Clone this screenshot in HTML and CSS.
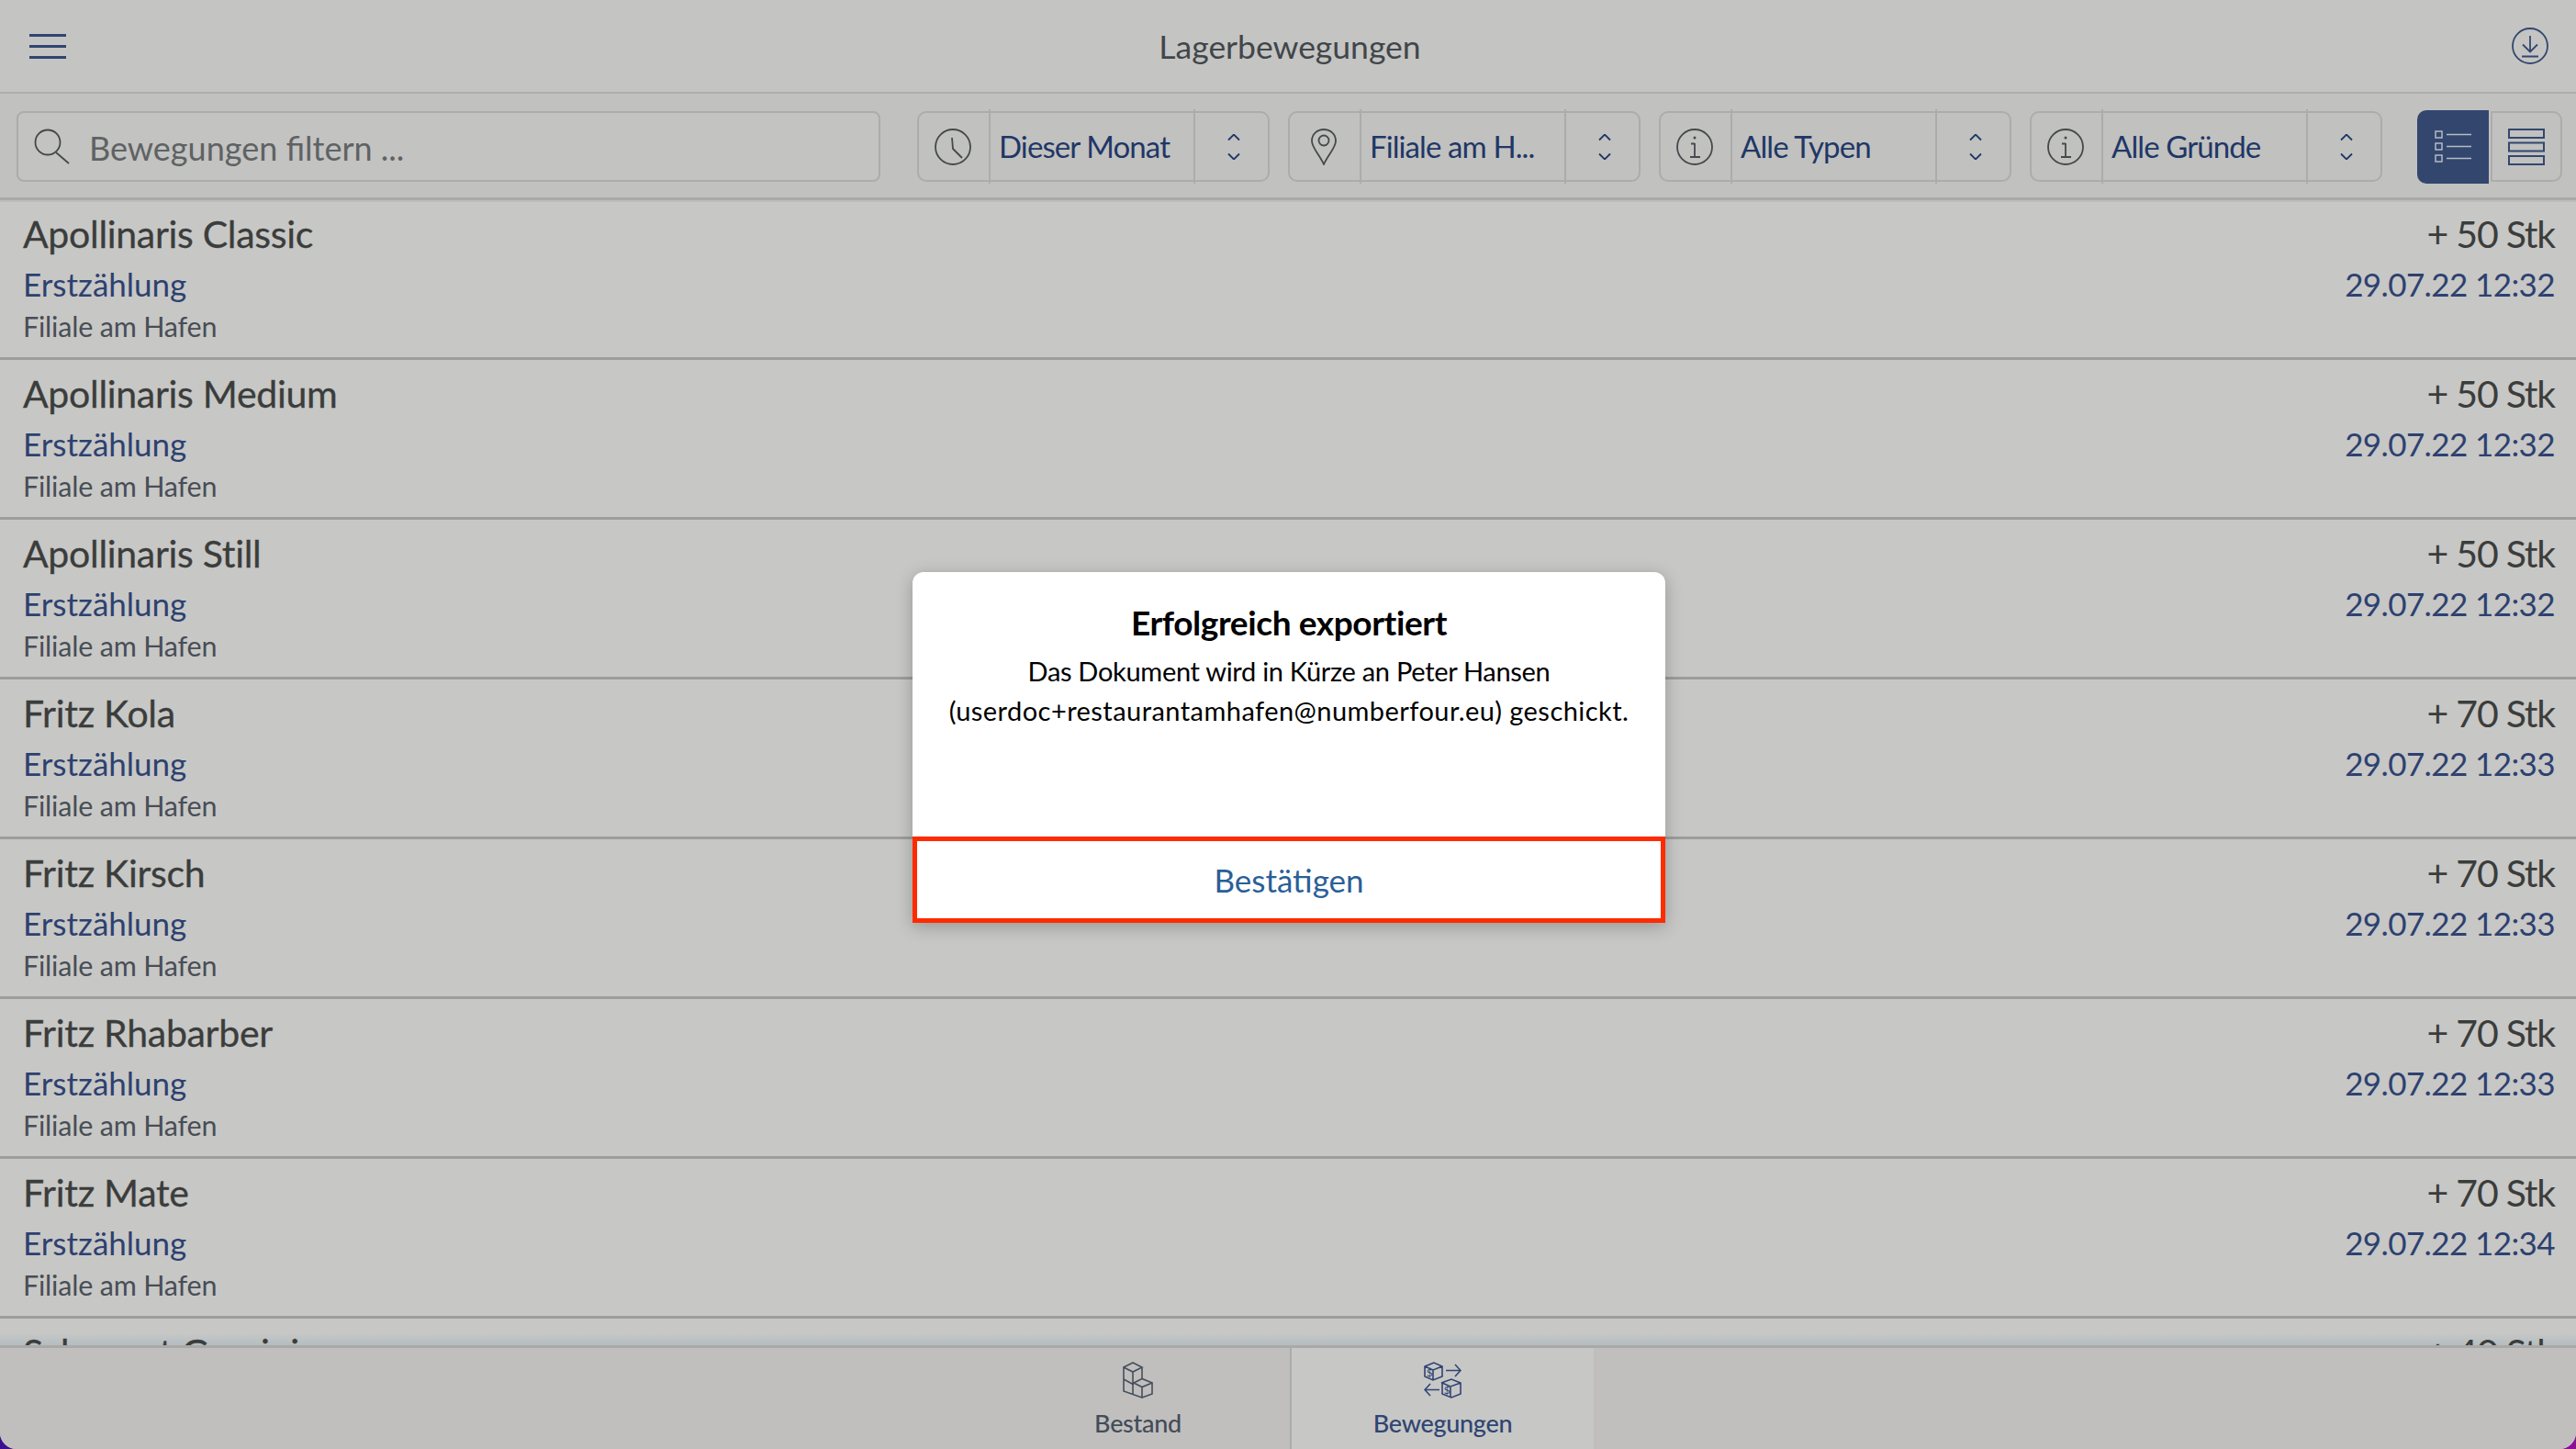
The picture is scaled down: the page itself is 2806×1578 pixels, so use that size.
FILE: index.html
```html
<!DOCTYPE html>
<html lang="de">
<head>
    <meta charset="UTF-8">
    <title>Lagerbewegungen</title>
    <link rel="stylesheet" href="styles.css">
</head>
<body>
<div class="screen">
    <header class="topbar">
        <svg class="topbar__menu" viewBox="0 0 40 27"><path d="M0 1.5H40M0 13.5H40M0 25.5H40"/></svg>
        <div class="topbar__title">Lagerbewegungen</div>
        <svg class="topbar__export" viewBox="0 0 40 40"><circle cx="20" cy="20" r="19"/><path d="M20 9V26M12 18.5L20 26.5L28 18.5M11 31.5H29"/></svg>
    </header>

    <div class="toolbar">
        <div class="search">
            <svg class="search__icon" viewBox="0 0 40 39"><circle cx="15" cy="15" r="13.5"/><path d="M24 26L38 38"/></svg>
            <span class="search__text">Bewegungen filtern ...</span>
        </div>
        <div class="filters">
            <div class="filter">
                <div class="filter__icon"><svg class="icon-40" viewBox="0 0 40 40"><circle cx="20" cy="20" r="19"/><path d="M19 10L20 22L30 32"/></svg></div>
                <div class="filter__value">Dieser Monat</div>
                <div class="filter__arrows"><svg class="arrows" viewBox="0 0 14 28"><path d="M1 6.500L7 0.500L13 6.500M1 21.500L7 27.500L13 21.500"/></svg></div>
            </div>
            <div class="filter">
                <div class="filter__icon"><svg class="icon-pin" viewBox="0 0 28 40"><path d="M14 39C9 28 1 21 1 13.500C1 6 7 1 14 1S27 6 27 13.500C27 21 19 28 14 39Z"/><circle cx="14" cy="13" r="5.500"/></svg></div>
                <div class="filter__value">Filiale am H...</div>
                <div class="filter__arrows"><svg class="arrows" viewBox="0 0 14 28"><path d="M1 6.500L7 0.500L13 6.500M1 21.500L7 27.500L13 21.500"/></svg></div>
            </div>
            <div class="filter">
                <div class="filter__icon"><svg class="icon-40" viewBox="0 0 40 40"><circle cx="20" cy="20" r="19"/><path d="M20 16V31M15 31H26M16 16.500H20"/><circle class="dot" cx="20" cy="10" r="1.500"/></svg></div>
                <div class="filter__value">Alle Typen</div>
                <div class="filter__arrows"><svg class="arrows" viewBox="0 0 14 28"><path d="M1 6.500L7 0.500L13 6.500M1 21.500L7 27.500L13 21.500"/></svg></div>
            </div>
            <div class="filter">
                <div class="filter__icon"><svg class="icon-40" viewBox="0 0 40 40"><circle cx="20" cy="20" r="19"/><path d="M20 16V31M15 31H26M16 16.500H20"/><circle class="dot" cx="20" cy="10" r="1.500"/></svg></div>
                <div class="filter__value">Alle Gründe</div>
                <div class="filter__arrows"><svg class="arrows" viewBox="0 0 14 28"><path d="M1 6.500L7 0.500L13 6.500M1 21.500L7 27.500L13 21.500"/></svg></div>
            </div>
        </div>
        <div class="view-toggle">
            <div class="view-toggle__item view-toggle__item--active">
                <svg class="icon-list" viewBox="0 0 40 35"><path d="M1 1H8V8H1ZM1 14H8V21H1ZM1 27H8V34H1ZM13 4.500H40M13 17.500H40M13 30.500H40"/></svg>
            </div>
            <div class="view-toggle__item">
                <svg class="icon-view" viewBox="0 0 40 40"><path d="M1 1H39V10H1ZM1 15.500H39V24.500H1ZM1 30H39V39H1Z"/></svg>
            </div>
        </div>
    </div>

    <div class="list">
        <div class="row">
            <div><div class="row__title">Apollinaris Classic</div><div class="row__type">Erstzählung</div><div class="row__store">Filiale am Hafen</div></div>
            <div class="row__right"><div class="row__title row__qty">+ 50 Stk</div><div class="row__type row__date">29.07.22 12:32</div></div>
        </div>
        <div class="row">
            <div><div class="row__title">Apollinaris Medium</div><div class="row__type">Erstzählung</div><div class="row__store">Filiale am Hafen</div></div>
            <div class="row__right"><div class="row__title row__qty">+ 50 Stk</div><div class="row__type row__date">29.07.22 12:32</div></div>
        </div>
        <div class="row">
            <div><div class="row__title">Apollinaris Still</div><div class="row__type">Erstzählung</div><div class="row__store">Filiale am Hafen</div></div>
            <div class="row__right"><div class="row__title row__qty">+ 50 Stk</div><div class="row__type row__date">29.07.22 12:32</div></div>
        </div>
        <div class="row">
            <div><div class="row__title">Fritz Kola</div><div class="row__type">Erstzählung</div><div class="row__store">Filiale am Hafen</div></div>
            <div class="row__right"><div class="row__title row__qty">+ 70 Stk</div><div class="row__type row__date">29.07.22 12:33</div></div>
        </div>
        <div class="row">
            <div><div class="row__title">Fritz Kirsch</div><div class="row__type">Erstzählung</div><div class="row__store">Filiale am Hafen</div></div>
            <div class="row__right"><div class="row__title row__qty">+ 70 Stk</div><div class="row__type row__date">29.07.22 12:33</div></div>
        </div>
        <div class="row">
            <div><div class="row__title">Fritz Rhabarber</div><div class="row__type">Erstzählung</div><div class="row__store">Filiale am Hafen</div></div>
            <div class="row__right"><div class="row__title row__qty">+ 70 Stk</div><div class="row__type row__date">29.07.22 12:33</div></div>
        </div>
        <div class="row">
            <div><div class="row__title">Fritz Mate</div><div class="row__type">Erstzählung</div><div class="row__store">Filiale am Hafen</div></div>
            <div class="row__right"><div class="row__title row__qty">+ 70 Stk</div><div class="row__type row__date">29.07.22 12:34</div></div>
        </div>
        <div class="row">
            <div><div class="row__title">Schwarzt Granini</div></div>
            <div class="row__right"><div class="row__title row__qty">+ 40 Stk</div></div>
        </div>
    </div>

    <nav class="tabs">
        <div class="tab">
            <svg class="tab__icon tab__icon--stock" viewBox="0 0 33 40"><path d="M11 1L1 6L11 11L21 6ZM1 6V32L21 39M11 11V36M1 19L12 25M21 18.500L12 23L21 27.500L32 23ZM21 27.500V39L32 35V23M21 6V18.500"/></svg>
            <div class="tab__label">Bestand</div>
        </div>
        <div class="tab tab--active">
            <svg class="tab__icon" viewBox="0 0 41 40"><path d="M11 1L1 5V16L10 20L20 16V5ZM1 5L10 9L20 5M10 9V20M24 9.500H40M34 3L40 9.500L34 16M19 23L30 19L40 23V35L30 39L20 35V23ZM20 23L29 27L40 23M29 27V39M17 30.500H1M7 24L1 30.500L7 37"/><text class="tab__dollar" x="2.800" y="16">$</text><text class="tab__dollar" x="21.800" y="35">$</text></svg>
            <div class="tab__label">Bewegungen</div>
        </div>
    </nav>

    <div class="dialog">
        <div class="dialog__body">
            <div class="dialog__title">Erfolgreich exportiert</div>
            <div class="dialog__text dialog__text--first">Das Dokument wird in Kürze an Peter Hansen</div>
            <div class="dialog__text">(userdoc+restaurantamhafen@numberfour.eu) geschickt.</div>
        </div>
        <div class="dialog__button">Bestätigen</div>
    </div>
</div>
</body>
</html>
```

FILE: styles.css
```css
* {
    box-sizing: border-box;
}

html, body {
    margin: 0;
    padding: 0;
    height: 100%;
}

body {
    background: linear-gradient(90deg, #3a0f90, #8a1095);
    font-family: "Lato", "Noto Sans", sans-serif;
    overflow: hidden;
}

svg {
    display: block;
    fill: none;
}

.screen {
    position: relative;
    display: flex;
    flex-direction: column;
    height: 1578px;
    background: #c7c7c5;
    border-radius: 0 0 18px 18px;
    overflow: hidden;
}

/* top bar */
.topbar {
    display: flex;
    align-items: center;
    justify-content: space-between;
    height: 102px;
    padding: 0 30px 0 32px;
    background: #c4c4c2;
    border-bottom: 2px solid #aeaeac;
    flex-shrink: 0;
    position: relative;
}

.topbar__menu {
    width: 40px;
    height: 27px;
    stroke: #2f4573;
    stroke-width: 3;
}

.topbar__title {
    font-size: 35.500px;
    color: #41464a;
    margin-left: 2px;
}

.topbar__export {
    width: 40px;
    height: 40px;
    stroke: #33476f;
    stroke-width: 1.800;
}

/* filter bar */
.toolbar {
    display: flex;
    align-items: center;
    height: 116px;
    padding: 2px 15px 0 18px;
    background: #c1c1bf;
    border-bottom: 3px solid #a9a9a7;
    box-shadow: 0 2px 0 #bcbcba;
    flex-shrink: 0;
}

.search {
    display: flex;
    align-items: center;
    width: 941px;
    height: 77px;
    padding-left: 17px;
    border: 2px solid #acacaa;
    border-radius: 8px;
    background: #c3c3c1;
}

.search__icon {
    width: 40px;
    height: 39px;
    stroke: #45484a;
    stroke-width: 1.800;
    margin-right: 20px;
}

.search__text {
    font-size: 36px;
    color: #5f6264;
    padding-top: 2px;
}

.filters {
    display: flex;
    gap: 20px;
    margin-left: 40px;
}

.filter {
    display: flex;
    width: 384px;
    height: 77px;
    border: 2px solid #acacaa;
    border-radius: 10px;
    color: #1f3767;
}

.filter__icon {
    display: flex;
    align-items: center;
    justify-content: center;
    width: 76px;
    padding-right: 2px;
    flex-shrink: 0;
    stroke: #45494c;
    stroke-width: 1.800;
}

.icon-40 {
    width: 40px;
    height: 40px;
}

.icon-pin {
    width: 28px;
    height: 40px;
}

.dot {
    fill: #45494c;
    stroke: none;
}

.filter__value {
    flex: 1;
    display: flex;
    align-items: center;
    padding: 0 0 2px 9px;
    margin: -4px 0;
    font-size: 33px;
    letter-spacing: -0.900px;
    border-left: 2px solid #acacaa;
    border-right: 2px solid #acacaa;
    white-space: nowrap;
}

.filter__arrows {
    display: flex;
    align-items: center;
    justify-content: center;
    width: 79px;
    padding-left: 4px;
    flex-shrink: 0;
}

.arrows {
    width: 14px;
    height: 28px;
    stroke: #1f3767;
    stroke-width: 1.800;
}

.view-toggle {
    display: flex;
    align-items: center;
    margin-left: 38px;
}

.view-toggle__item {
    display: flex;
    align-items: center;
    justify-content: center;
    width: 78px;
    height: 77px;
    margin-left: 2px;
    border: 2px solid #acacaa;
    border-radius: 0 10px 10px 0;
    stroke: #33476f;
    stroke-width: 2;
}

.view-toggle__item--active {
    height: 80px;
    margin-left: 0;
    border: 0;
    border-radius: 10px 0 0 10px;
    background: #33466e;
    stroke: #b4bbc3;
    stroke-width: 1.500;
}

.icon-view {
    width: 40px;
    height: 40px;
}

.icon-list {
    width: 40px;
    height: 35px;
}

/* movements */
.list {
    position: relative;
    flex: 1;
    overflow: hidden;
}

.list::before {
    content: "";
    position: absolute;
    left: 0;
    right: 0;
    bottom: 0;
    height: 13px;
    background: linear-gradient(#c7c7c500, #b3bdc1);
}

.row {
    position: relative;
    display: flex;
    justify-content: space-between;
    height: 174px;
    padding: 0 23px 0 25px;
    border-bottom: 3px solid #9d9d9b;
}

.row__right {
    text-align: right;
}

.row__title {
    font-size: 41px;
    line-height: 52px;
    margin-top: 11px;
    color: #3b3d3c;
    letter-spacing: -0.300px;
    -webkit-text-stroke: 0.300px #3b3d3c;
}

.row__qty {
    letter-spacing: -1.200px;
    -webkit-text-stroke: 0;
}

.row__type {
    font-size: 35px;
    line-height: 44px;
    margin-top: 6px;
    color: #2d4170;
}

.row__date {
    letter-spacing: -0.600px;
}

.row__store {
    font-size: 30.500px;
    line-height: 38px;
    margin-top: 5px;
    color: #484e56;
    letter-spacing: -0.200px;
}

/* bottom tabs */
.tabs {
    display: flex;
    justify-content: center;
    height: 113px;
    padding-left: 4px;
    background: #c0bfbd;
    border-top: 3px solid #aaa9a7;
    flex-shrink: 0;
}

.tab {
    display: flex;
    flex-direction: column;
    align-items: center;
    width: 331px;
    padding-top: 15px;
    color: #434c59;
    stroke: #454f5c;
    stroke-width: 1.600;
}

.tab--active {
    background: #c7c7c5;
    border-left: 2px solid #acacaa;
    color: #2f4573;
    stroke: #2f4573;
}

.tab__icon {
    width: 41px;
    height: 40px;
}

.tab__icon--stock {
    width: 33px;
}

.tab__dollar {
    font-size: 12px;
    fill: #2f4573;
    stroke: none;
}

.tab__label {
    margin-top: 10px;
    font-size: 27px;
    font-weight: 500;
    line-height: 34px;
    letter-spacing: -0.300px;
}

/* export dialog */
.dialog {
    position: absolute;
    left: 994px;
    top: 623px;
    display: flex;
    flex-direction: column;
    width: 820px;
    height: 382px;
    background: #fff;
    border-radius: 12px 12px 0 0;
    box-shadow: 0 4px 18px rgba(0, 0, 0, 0.25);
}

.dialog__body {
    flex: 1;
    padding-top: 30px;
    text-align: center;
    color: #000;
}

.dialog__title {
    font-size: 37px;
    font-weight: 700;
    line-height: 50px;
    letter-spacing: -0.400px;
    margin-bottom: 6px;
}

.dialog__text {
    font-size: 29px;
    line-height: 43px;
    letter-spacing: 0.450px;
}

.dialog__text--first {
    letter-spacing: -0.300px;
}

.dialog__button {
    display: flex;
    align-items: center;
    justify-content: center;
    height: 94px;
    border: 5px solid #ff2a00;
    font-size: 35px;
    color: #2a5f98;
}
```
